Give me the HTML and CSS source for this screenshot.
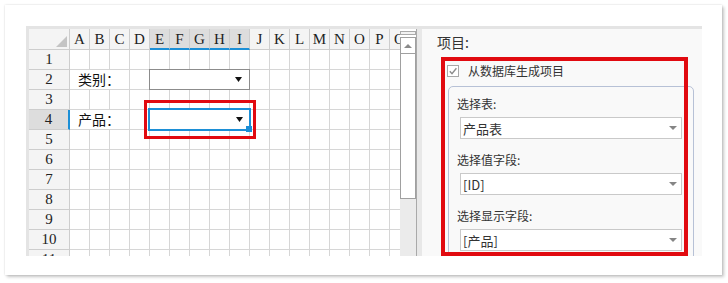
FILE: index.html
```html
<!DOCTYPE html>
<html lang="zh-CN">
<head>
    <meta charset="UTF-8">
    <title>下拉框设置</title>
    <link rel="stylesheet" href="styles.css">
</head>
<body>
    <div class="card">
        <div class="frame">
            <!-- 表格区域 -->
            <div class="sheet-wrap">
                <div class="sheet">
                    <div class="corner"><span class="corner-tri"></span></div>
                    <div class="col-heads">
                        <div class="col-head">A</div>
                        <div class="col-head">B</div>
                        <div class="col-head">C</div>
                        <div class="col-head">D</div>
                        <div class="col-head sel">E</div>
                        <div class="col-head sel">F</div>
                        <div class="col-head sel">G</div>
                        <div class="col-head sel">H</div>
                        <div class="col-head sel">I</div>
                        <div class="col-head">J</div>
                        <div class="col-head">K</div>
                        <div class="col-head">L</div>
                        <div class="col-head">M</div>
                        <div class="col-head">N</div>
                        <div class="col-head">O</div>
                        <div class="col-head">P</div>
                        <div class="col-head">Q</div>
                    </div>
                    <div class="row-heads">
                        <div class="row-head">1</div>
                        <div class="row-head">2</div>
                        <div class="row-head">3</div>
                        <div class="row-head sel">4</div>
                        <div class="row-head">5</div>
                        <div class="row-head">6</div>
                        <div class="row-head">7</div>
                        <div class="row-head">8</div>
                        <div class="row-head">9</div>
                        <div class="row-head">10</div>
                        <div class="row-head">11</div>
                    </div>
                    <div class="cells">
                        <div class="label-cell row-2">类别：</div>
                        <div class="combo row-2">
                            <svg width="7" height="5" viewBox="0 0 7 5"><polygon points="0,0 7,0 3.5,5" fill="#111"/></svg>
                        </div>
                        <div class="label-cell row-4">产品：</div>
                        <div class="combo row-4 active">
                            <svg width="7" height="5" viewBox="0 0 7 5"><polygon points="0,0 7,0 3.5,5" fill="#111"/></svg>
                            <span class="handle"></span>
                            <span class="mark mark-cell"></span>
                        </div>
                    </div>
                </div>
                <div class="vscroll">
                    <div class="vs-top"><div class="vs-split"></div></div>
                    <div class="vs-btn">
                        <svg width="8" height="4" viewBox="0 0 8 4"><polygon points="0,4 8,4 4,0" fill="#8a8a8a"/></svg>
                    </div>
                    <div class="vs-thumb"></div>
                </div>
            </div>
            <div class="divider"></div>

            <!-- 属性面板 -->
            <div class="panel">
                <div class="panel-title">项目:</div>
                <div class="items">
                    <div class="check-row">
                        <span class="check">
                            <svg width="10" height="10" viewBox="0 0 10 10"><path d="M1.8 5.2 L4 7.6 L8.4 2.2" fill="none" stroke="#8c8c8c" stroke-width="1.4"/></svg>
                        </span>
                        <span>从数据库生成项目</span>
                    </div>
                    <div class="group">
                        <div class="field-label">选择表:</div>
                        <div class="select">
                            <span>产品表</span>
                            <svg width="8" height="4" viewBox="0 0 8 4"><polygon points="0,0 8,0 4,4" fill="#858585"/></svg>
                        </div>
                        <div class="field-label">选择值字段:</div>
                        <div class="select">
                            <span>[ID]</span>
                            <svg width="8" height="4" viewBox="0 0 8 4"><polygon points="0,0 8,0 4,4" fill="#858585"/></svg>
                        </div>
                        <div class="field-label">选择显示字段:</div>
                        <div class="select">
                            <span>[产品]</span>
                            <svg width="8" height="4" viewBox="0 0 8 4"><polygon points="0,0 8,0 4,4" fill="#858585"/></svg>
                        </div>
                    </div>
                    <span class="mark mark-panel"></span>
                </div>
            </div>
        </div>
    </div>
</body>
</html>
```

FILE: styles.css
```css
body {
    margin: 0;
    background: #fff;
    font-family: "Noto Sans CJK SC", sans-serif;
}

.card {
    margin: 5px;
    width: 717px;
    height: 270px;
    box-sizing: border-box;
    padding: 21px 20px 19px 21px;
    background: #fff;
    box-shadow: 0 0 2px rgba(0,0,0,0.15), 2px 2px 3px rgba(0,0,0,0.22);
}

.frame {
    display: flex;
    height: 230px;
    box-sizing: border-box;
    border-top: 3px solid #e4e4e4;
    overflow: hidden;
}

/* 表格 */
.sheet-wrap {
    display: flex;
    border-left: 3px solid #e4e4e4;
}

.sheet {
    width: 371px;
    display: grid;
    grid-template-columns: 41px minmax(0, 1fr);
    grid-template-rows: 21px minmax(0, 1fr);
    overflow: hidden;
    font-family: "Liberation Serif", serif;
    font-size: 15px;
    color: #222;
}

.corner {
    position: relative;
    box-sizing: border-box;
    border-right: 1px solid #cdcdcd;
    border-bottom: 1px solid #cdcdcd;
    background: #f4f4f4;
}

.corner-tri {
    position: absolute;
    right: 2px;
    bottom: 2px;
    width: 0;
    height: 0;
    border-left: 11px solid transparent;
    border-bottom: 11px solid #c4c4c4;
}

.col-heads {
    display: flex;
    overflow: hidden;
}

.col-head {
    flex: none;
    width: 20px;
    height: 21px;
    box-sizing: border-box;
    border-right: 1px solid #cdcdcd;
    border-bottom: 1px solid #cdcdcd;
    background: #f4f4f4;
    text-align: center;
    line-height: 20px;
}

.col-head.sel {
    background: #dddddd;
    border-bottom: 2px solid #1c8fd6;
}

.row-heads {
    display: flex;
    flex-direction: column;
    overflow: hidden;
}

.row-head {
    flex: none;
    height: 20px;
    box-sizing: border-box;
    border-right: 1px solid #cdcdcd;
    border-bottom: 1px solid #cdcdcd;
    background: #f4f4f4;
    text-align: center;
    line-height: 19px;
}

.row-head.sel {
    background: #dddddd;
    border-right: 2px solid #1c8fd6;
}

.cells {
    display: grid;
    grid-template-columns: repeat(17, 20px);
    grid-template-rows: repeat(11, 20px);
    background-image:
        linear-gradient(to right, transparent 19px, #d6d6d6 19px),
        linear-gradient(to bottom, transparent 19px, #d6d6d6 19px);
    background-size: 20px 20px;
    overflow: hidden;
}

.row-2 { grid-row: 2; }
.row-4 { grid-row: 4; }

.label-cell {
    grid-column: 1 / span 3;
    box-sizing: border-box;
    border-right: 1px solid #d6d6d6;
    border-bottom: 1px solid #d6d6d6;
    background: #fff;
    padding-left: 8px;
    font-family: "Noto Sans CJK SC", sans-serif;
    font-size: 14px;
    line-height: 19px;
    color: #111;
}

.combo {
    grid-column: 5 / span 5;
    position: relative;
    margin: -1px 0 0 -1px;
    border: 1px solid #8c8c8c;
    background: #fff;
    display: flex;
    align-items: center;
    justify-content: flex-end;
    padding-right: 7px;
}

.combo.active {
    z-index: 1;
    margin: -2px -1px -1px -2px;
    border: 2px solid #1c8fd6;
    padding-right: 6px;
}

.handle {
    position: absolute;
    right: -3px;
    bottom: -3px;
    width: 6px;
    height: 6px;
    background: #1c8fd6;
}

.mark {
    position: absolute;
    box-sizing: border-box;
    border: 3px solid #e10a10;
    pointer-events: none;
}

.mark-cell {
    left: -6px;
    top: -10px;
    right: -7px;
    bottom: -10px;
}

/* 滚动条 */
.vscroll {
    width: 16px;
    display: flex;
    flex-direction: column;
    border-right: 1px solid #a9a9a9;
    background: #ebebeb;
}

.vs-top {
    background: #fff;
    padding: 2px 0 2px;
}

.vs-split {
    height: 4px;
    box-sizing: border-box;
    border: 1px solid #aaaaaa;
    background: #f2f2f2;
}

.vs-btn {
    height: 17px;
    box-sizing: border-box;
    border: 1px solid #a0a0a0;
    background: #fff;
    display: flex;
    align-items: center;
    justify-content: center;
}

.vs-thumb {
    height: 145px;
    box-sizing: border-box;
    border: 1px solid #a0a0a0;
    border-top: none;
    background: #fff;
}

.divider {
    width: 5px;
    background: #e8e8e8;
}

/* 属性面板 */
.panel {
    flex: 1;
    background: #f9f9f9;
    padding-left: 15px;
    font-size: 12px;
    color: #333;
}

.panel-title {
    height: 28px;
    line-height: 26px;
    font-size: 14px;
}

.items {
    position: relative;
    width: 247px;
    height: 199px;
    margin-left: 4px;
    box-sizing: border-box;
    padding: 7px 0 0 6px;
}

.mark-panel {
    inset: 0;
    border-width: 4px;
}

.check-row {
    display: flex;
    align-items: center;
    gap: 9px;
    height: 13px;
}

.check {
    width: 12px;
    height: 12px;
    box-sizing: border-box;
    border: 1px solid #a8a8a8;
    background: #fff;
    display: flex;
    align-items: center;
    justify-content: center;
}

.group {
    width: 246px;
    height: 200px;
    margin: 9px 0 0 1px;
    box-sizing: border-box;
    border: 1px solid #b7c1d6;
    border-radius: 5px;
    padding: 7px 0 0 8px;
}

.field-label {
    height: 20px;
    line-height: 20px;
}

.select {
    width: 222px;
    height: 22px;
    margin: 3px 0 11px 3px;
    box-sizing: border-box;
    border: 1px solid #c9c9c9;
    background: #fff;
    display: flex;
    align-items: center;
    justify-content: space-between;
    padding: 0 4px 0 2px;
    font-size: 13px;
}
```
